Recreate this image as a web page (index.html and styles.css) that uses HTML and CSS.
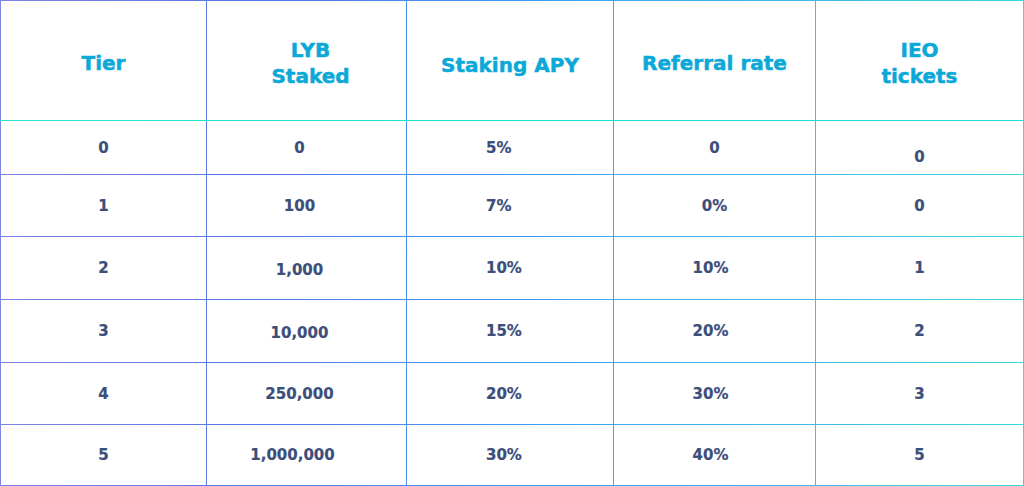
FILE: index.html
```html
<!DOCTYPE html>
<html lang="en">
<head>
<meta charset="utf-8">
<title>Tiers</title>
<link rel="stylesheet" href="styles.css">
</head>
<body>
<div class="table">
  <div class="th">Tier</div>
  <div class="th th-shift">LYB<br>Staked</div>
  <div class="th th-low">Staking APY</div>
  <div class="th">Referral rate</div>
  <div class="th">IEO<br>tickets</div>

  <div class="td">0</div>
  <div class="td lyb">0</div>
  <div class="td apy">5%</div>
  <div class="td">0</div>
  <div class="td low">0</div>

  <div class="td">1</div>
  <div class="td lyb">100</div>
  <div class="td apy">7%</div>
  <div class="td">0%</div>
  <div class="td">0</div>

  <div class="td">2</div>
  <div class="td lyb down">1,000</div>
  <div class="td apy">10%</div>
  <div class="td ref">10%</div>
  <div class="td">1</div>

  <div class="td">3</div>
  <div class="td lyb down">10,000</div>
  <div class="td apy">15%</div>
  <div class="td ref">20%</div>
  <div class="td">2</div>

  <div class="td">4</div>
  <div class="td lyb">250,000</div>
  <div class="td apy">20%</div>
  <div class="td ref">30%</div>
  <div class="td">3</div>

  <div class="td">5</div>
  <div class="td lyb wide">1,000,000</div>
  <div class="td apy">30%</div>
  <div class="td ref">40%</div>
  <div class="td">5</div>
</div>
</body>
</html>
```

FILE: styles.css
```css
html, body {
  margin: 0;
  padding: 0;
  background: #ffffff;
}

.table {
  box-sizing: border-box;
  width: 1024px;
  height: 486px;
  padding: 1px;
  display: grid;
  grid-template-columns: 205px 199px 206px 201px 207px;
  grid-template-rows: 119px 53px 61px 62px 62px 61px 60px;
  gap: 1px;
  background:
    linear-gradient(90deg, #2fe2d4, #10e6cc 50%, #1edadc) no-repeat 0 120px / 100% 1px,
    linear-gradient(90deg, #7f84e4 0%, #5578e4 25%, #3e9cf0 50%, #40b4ec 75%, #34dadc 100%);
  font-family: "DejaVu Sans", "Liberation Sans", sans-serif;
}

.th,
.td {
  background: #ffffff;
  display: flex;
  align-items: center;
  justify-content: center;
  text-align: center;
}

.th {
  color: #0ba8d8;
  font-size: 20px;
  font-weight: 700;
  line-height: 26px;
  padding-top: 4px;
  -webkit-text-stroke: 0.5px #0ba8d8;
}

.th-shift {
  padding-left: 8px;
}

.th-low {
  padding-top: 9px;
}

.td {
  color: #3c4e7a;
  font-size: 15px;
  font-weight: 700;
  -webkit-text-stroke: 0.2px #3c4e7a;
}

.lyb {
  padding-right: 14px;
}

.wide {
  padding-right: 28px;
}

.down {
  padding-top: 4px;
}

.apy {
  justify-content: flex-start;
  padding-left: 79px;
}

.ref {
  padding-right: 8px;
}

.low {
  padding-top: 18px;
}
```
